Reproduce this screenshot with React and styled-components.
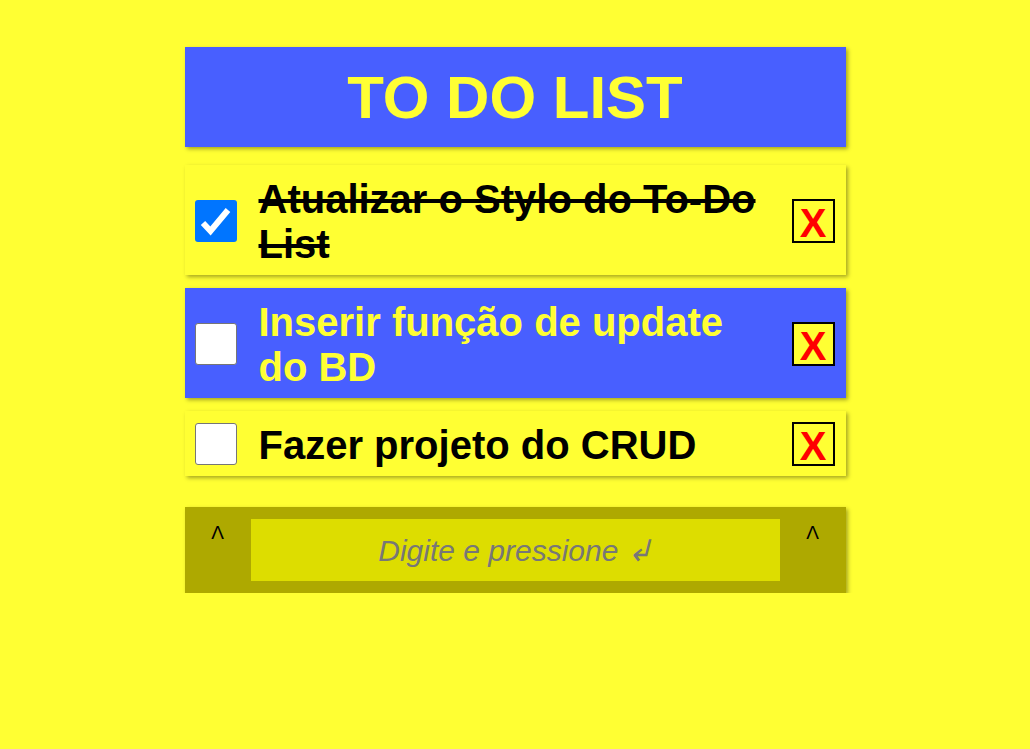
import React from 'react'
import styled, { createGlobalStyle } from 'styled-components'

const GlobalStyle = createGlobalStyle`
  body {
    margin: 0;
    background: #ffff33;
    font-family: "Liberation Sans", Arial, sans-serif;
  }
`

const Page = styled.div`
  width: 661px;
  margin: 47px auto 0;
  display: flex;
  flex-direction: column;
`

const Header = styled.h1`
  margin: 0 0 18px;
  height: 100px;
  display: flex;
  align-items: center;
  justify-content: center;
  background: #485fff;
  color: #ffff33;
  font-size: 60px;
  font-weight: bold;
  box-shadow: 2px 2px 4px rgba(0, 0, 0, 0.35);
`

const List = styled.ul`
  list-style: none;
  margin: 0;
  padding: 0;
  display: flex;
  flex-direction: column;
  gap: 13px;
`

const Item = styled.li`
  display: flex;
  align-items: center;
  padding: 9px 11px 8px 10px;
  background: ${p => (p.$alt ? '#485fff' : '#ffff33')};
  box-shadow: 2px 2px 4px rgba(0, 0, 0, 0.35);
`

const Check = styled.span`
  flex: none;
  width: 42px;
  height: 42px;
  box-sizing: border-box;
  border-radius: 3px;
  display: flex;
  background: ${p => (p.$checked ? '#0075ff' : '#fff')};
  border: ${p => (p.$checked ? 'none' : '1px solid #767676')};
`

const Label = styled.span`
  flex: 1;
  margin: 0 22px;
  padding-top: 3px;
  font-size: 40px;
  line-height: 45px;
  font-weight: bold;
  color: ${p => (p.$alt ? '#ffff33' : '#000')};
  text-decoration: ${p => (p.$done ? 'line-through' : 'none')};
`

const Remove = styled.button`
  flex: none;
  width: 43px;
  height: 44px;
  padding: 4px 0 0;
  box-sizing: border-box;
  border: 2px solid #000;
  background: #ffff33;
  color: #ff0000;
  font-family: "Liberation Sans", Arial, sans-serif;
  font-size: 40px;
  font-weight: bold;
  line-height: 36px;
`

const Form = styled.form`
  margin-top: 31px;
  display: flex;
  background: #aea900;
  padding: 12px 0;
  box-shadow: 2px 2px 4px rgba(0, 0, 0, 0.35);
`

const Caret = styled.span`
  width: 66px;
  text-align: center;
  font-size: 19px;
  line-height: 19px;
  padding-top: 4px;
  color: #000;
`

const Input = styled.input`
  flex: 1;
  height: 62px;
  box-sizing: border-box;
  padding: 1px 0 0;
  border: none;
  outline: none;
  background: #dddd00;
  text-align: center;
  font-family: "Liberation Sans", Arial, sans-serif;
  font-size: 30px;
  font-style: italic;
  &::placeholder {
    color: #777;
  }
`

const todos = [
  { text: 'Atualizar o Stylo do To-Do List', done: true },
  { text: 'Inserir função de update do BD', done: false, alt: true },
  { text: 'Fazer projeto do CRUD', done: false },
]

export default function App() {
  return (
    <>
      <GlobalStyle />
      <Page>
        <Header>TO DO LIST</Header>
        <List>
          {todos.map(t => (
            <Item key={t.text} $alt={t.alt}>
              <Check $checked={t.done}>
                {t.done && (
                  <svg width="42" height="42" viewBox="0 0 42 42">
                    <path d="M8 23 L15.5 31 L33 10" fill="none" stroke="#fff" strokeWidth="6" />
                  </svg>
                )}
              </Check>
              <Label $alt={t.alt} $done={t.done}>{t.text}</Label>
              <Remove type="button">X</Remove>
            </Item>
          ))}
        </List>
        <Form onSubmit={e => e.preventDefault()}>
          <Caret>Λ</Caret>
          <Input placeholder="Digite e pressione ↲" />
          <Caret>Λ</Caret>
        </Form>
      </Page>
    </>
  )
}
